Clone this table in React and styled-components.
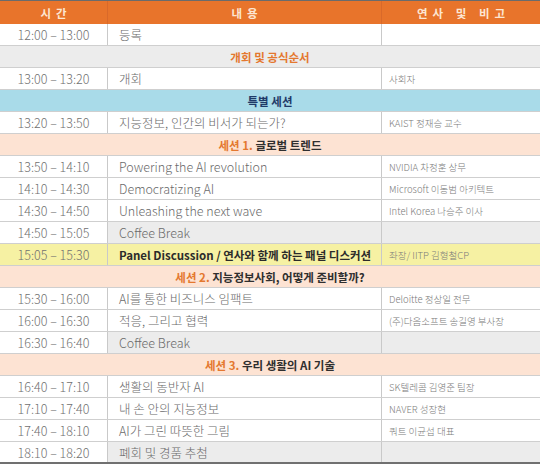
import styled, { createGlobalStyle } from "styled-components"

const Global = createGlobalStyle`
  body {
    margin: 0;
    background: #ffffff;
    font-family: "Noto Sans CJK KR", "Noto Sans", sans-serif;
  }
`

const Table = styled.div`
  width: 540px;
  border-top: 1px solid #6b6b6b;
`

const HeadRow = styled.div`
  display: grid;
  grid-template-columns: 107px 274px 159px;
  height: 23px;
  background: #e8742b;
`

const HeadCell = styled.div`
  display: flex;
  align-items: center;
  justify-content: center;
  color: #fde6d2;
  font-size: 11.5px;
  font-weight: 700;
  letter-spacing: 5px;
  padding-left: 5px;
  border-left: ${(p) => (p.$first ? "none" : "1px solid #d9692a")};
`

const Row = styled.div`
  display: grid;
  grid-template-columns: 107px 274px 159px;
  height: ${(p) => (p.$last ? "20px" : "21px")};
  border-bottom: ${(p) => (p.$last ? "2px solid #707070" : "1px solid #cfcfcf")};
  background: ${(p) => p.$bg || "#ffffff"};
`

const TimeCell = styled.div`
  display: flex;
  align-items: center;
  justify-content: center;
  color: #707070;
  font-size: 12.5px;
  font-weight: 300;
`

const Cell = styled.div`
  display: flex;
  align-items: center;
  border-left: 1px solid #c9c9c9;
  background: ${(p) => p.$bg || "transparent"};
  color: ${(p) => (p.$strong ? "#2b2b2b" : "#6a6a6a")};
  font-size: ${(p) => (p.$strong ? "11.5px" : "12.5px")};
  font-weight: ${(p) => (p.$strong ? 700 : 300)};
  padding-left: 11px;
  white-space: nowrap;
`

const Speaker = styled(Cell)`
  font-size: 9.5px;
  padding-left: 7px;
  color: #7a7a7a;
  font-weight: 300;
`

const SectionRow = styled.div`
  display: flex;
  align-items: center;
  justify-content: center;
  height: 21px;
  border-bottom: 1px solid #cfcfcf;
  background: ${(p) => p.$bg};
  font-size: 11.5px;
  font-weight: 700;
  color: ${(p) => p.$color || "#2f2f2f"};
  white-space: pre;
`

const Accent = styled.span`
  color: #e4782f;
`

const rows = [
  { t: "12:00 – 13:00", c: "등록", s: "" },
  { section: "개회 및 공식순서", bg: "#ececec", color: "#e4782f" },
  { t: "13:00 – 13:20", c: "개회", s: "사회자" },
  { section: "특별 세션", bg: "#a9dbe9", color: "#1f3a68" },
  { t: "13:20 – 13:50", c: "지능정보, 인간의 비서가 되는가?", s: "KAIST 정재승 교수" },
  { section: "글로벌 트렌드", num: "세션 1. ", bg: "#fde3d3" },
  { t: "13:50 – 14:10", c: "Powering the AI revolution", s: "NVIDIA 차정훈 상무" },
  { t: "14:10 – 14:30", c: "Democratizing AI", s: "Microsoft 이동범 아키텍트" },
  { t: "14:30 – 14:50", c: "Unleashing the next wave", s: "Intel Korea 나승주 이사" },
  { t: "14:50 – 15:05", c: "Coffee Break", s: "", gray: true },
  { t: "15:05 – 15:30", c: "Panel Discussion / 연사와 함께 하는 패널 디스커션", s: "좌장/ IITP 김형철CP", yellow: true },
  { section: "지능정보사회, 어떻게 준비할까?", num: "세션 2. ", bg: "#fde3d3" },
  { t: "15:30 – 16:00", c: "AI를 통한 비즈니스 임팩트", s: "Deloitte 정상일 전무" },
  { t: "16:00 – 16:30", c: "적응, 그리고 협력", s: "(주)다음소프트 송길영 부사장" },
  { t: "16:30 – 16:40", c: "Coffee Break", s: "", gray: true },
  { section: "우리 생활의 AI 기술", num: "세션 3. ", bg: "#fde3d3" },
  { t: "16:40 – 17:10", c: "생활의 동반자 AI", s: "SK텔레콤 김영준 팀장" },
  { t: "17:10 – 17:40", c: "내 손 안의 지능정보", s: "NAVER 성장현" },
  { t: "17:40 – 18:10", c: "AI가 그린 따뜻한 그림", s: "쿼트 이균섭 대표" },
  { t: "18:10 – 18:20", c: "폐회 및 경품 추첨", s: "", gray: true },
]

export default function App() {
  return (
    <>
      <Global />
      <Table>
        <HeadRow>
          <HeadCell $first>시간</HeadCell>
          <HeadCell>내용</HeadCell>
          <HeadCell>연사 및 비고</HeadCell>
        </HeadRow>
        {rows.map((r, i) => {
          if (r.section) {
            return (
              <SectionRow key={i} $bg={r.bg} $color={r.color}>
                {r.num && <Accent>{r.num}</Accent>}
                {r.section}
              </SectionRow>
            )
          }
          const last = i === rows.length - 1
          const fill = r.yellow ? "#f6f1a3" : r.gray ? "#ececec" : null
          return (
            <Row key={i} $last={last} $bg={r.yellow ? "#f6f1a3" : null}>
              <TimeCell>{r.t}</TimeCell>
              <Cell $bg={fill} $strong={r.yellow}>{r.c}</Cell>
              <Speaker $bg={fill}>{r.s}</Speaker>
            </Row>
          )
        })}
      </Table>
    </>
  )
}
